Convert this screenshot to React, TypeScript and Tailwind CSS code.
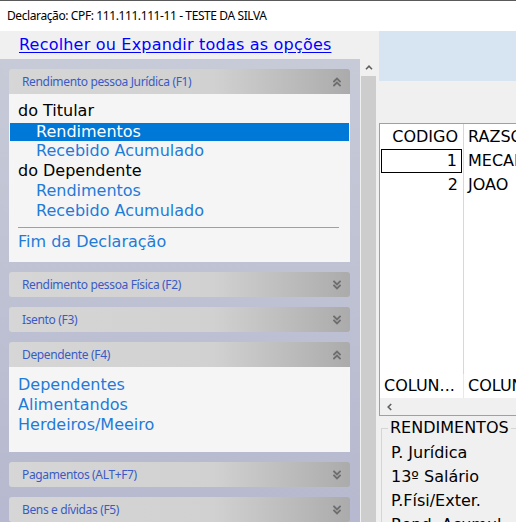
import React from "react";

function Chev({ up }: { up: boolean }) {
  return (
    <svg width="8" height="10" viewBox="0 0 8 10" className="shrink-0">
      {up ? (
        <g fill="none" stroke="#6e6e6e" strokeWidth="1.9" strokeLinecap="square">
          <path d="M1 4.5 L4 1.5 L7 4.5" />
          <path d="M1 8.5 L4 5.5 L7 8.5" />
        </g>
      ) : (
        <g fill="none" stroke="#6e6e6e" strokeWidth="1.9" strokeLinecap="square">
          <path d="M1 1.5 L4 4.5 L7 1.5" />
          <path d="M1 5.5 L4 8.5 L7 5.5" />
        </g>
      )}
    </svg>
  );
}

function Header({ title, open }: { title: string; open: boolean }) {
  return (
    <div
      className={
        "h-[25px] shrink-0 flex items-center justify-between pl-[13px] pr-[9px] bg-[linear-gradient(to_right,#d6d6d6_0%,#d1d1d1_60%,#ababab_100%)] font-['Noto_Sans',sans-serif] text-[12px] tracking-[-0.35px] text-[#3a5bc6] " +
        (open ? "rounded-t-[3px]" : "rounded-[3px]")
      }
    >
      <span>{title}</span>
      <Chev up={open} />
    </div>
  );
}

export default function App() {
  return (
    <div className="w-[516px] h-[522px] overflow-hidden flex flex-col bg-[#f0f0f0] font-['DejaVu_Sans',sans-serif] text-[16px]">
      {/* title bar */}
      <div className="h-[31px] shrink-0 bg-white border-t border-[#5a5a5a] flex items-center pl-[7px] font-['Noto_Sans',sans-serif] text-[12px] tracking-[-0.4px] text-black">
        Declaração: CPF: 111.111.111-11 - TESTE DA SILVA
      </div>
      <div className="flex flex-1 min-h-0">
        {/* left */}
        <div className="w-[379px] shrink-0 flex flex-col min-h-0">
          <div className="h-[28px] shrink-0 flex items-center pl-[19px] leading-none">
            <span className="text-[#0000ff] underline underline-offset-[2px] tracking-[0.2px]">Recolher ou Expandir todas as opções</span>
          </div>
          <div className="flex flex-1 min-h-0">
            <div className="w-[360px] shrink-0 overflow-hidden bg-[linear-gradient(to_bottom,#c7cad7,#b6b9cf)] pt-[10px] pl-[9px] pr-[10px] flex flex-col gap-[10px]">
              {/* Section 1 */}
              <div className="flex flex-col shrink-0">
                <Header title="Rendimento pessoa Jurídica (F1)" open />
                <div className="bg-[#f5f5f5] pt-[7px] pb-[10px] leading-[20px]">
                  <div className="h-5 pl-[9px] text-black">do Titular</div>
                  <div className="h-5 pt-[2px] px-[1px]">
                    <div className="h-[18px] bg-[#0078d7] text-white pl-[26px] leading-[18px]">Rendimentos</div>
                  </div>
                  <div className="h-5 pl-[27px] text-[#1f7bd8]">Recebido Acumulado</div>
                  <div className="h-5 pl-[9px] text-black">do Dependente</div>
                  <div className="h-5 pl-[27px] text-[#1f7bd8]">Rendimentos</div>
                  <div className="h-5 pl-[27px] text-[#1f7bd8]">Recebido Acumulado</div>
                  <div className="mt-[6px] ml-[9px] mr-[11px] h-px bg-[#a0a0a0]" />
                  <div className="mt-[4px] h-5 pl-[9px] text-[#1f7bd8]">Fim da Declaração</div>
                </div>
              </div>
              <div className="shrink-0">
                <Header title="Rendimento pessoa Física (F2)" open={false} />
              </div>
              <div className="shrink-0">
                <Header title="Isento (F3)" open={false} />
              </div>
              <div className="flex flex-col shrink-0">
                <Header title="Dependente (F4)" open />
                <div className="bg-[#f5f5f5] pt-[8px] pb-[17px] leading-[20px] text-[#1f7bd8]">
                  <div className="h-5 pl-[9px]">Dependentes</div>
                  <div className="h-5 pl-[9px]">Alimentandos</div>
                  <div className="h-5 pl-[9px]">Herdeiros/Meeiro</div>
                </div>
              </div>
              <div className="shrink-0">
                <Header title="Pagamentos (ALT+F7)" open={false} />
              </div>
              <div className="shrink-0">
                <Header title="Bens e dívidas (F5)" open={false} />
              </div>
            </div>
            {/* scrollbar */}
            <div className="w-[15px] ml-px shrink-0 flex flex-col">
              <div className="h-[17px] shrink-0 flex items-center justify-center bg-[#f0f0f0]">
                <svg width="8" height="5" viewBox="0 0 8 5">
                  <path d="M1 4.2 L4 1.2 L7 4.2" fill="none" stroke="#606060" strokeWidth="1.6" />
                </svg>
              </div>
              <div className="flex-1 bg-[#cdcdcd]" />
            </div>
          </div>
        </div>
        {/* right */}
        <div className="flex-1 min-w-0 overflow-hidden flex flex-col">
          <div className="h-[50px] shrink-0 bg-[#d7e4f2]" />
          <div className="h-[42px] shrink-0" />
          {/* grid */}
          <div className="h-[293px] shrink-0 w-[320px] border-t border-l border-b border-[#a0a0a0] bg-white flex flex-col leading-[20px] text-black">
            <div className="flex flex-1 min-h-0">
              <div className="w-[84px] shrink-0 border-r border-[#d8d8d8] flex flex-col">
                <div className="h-[25px] flex items-center justify-end pr-[5px]">CODIGO</div>
                <div className="h-[24px] ml-px mr-[1px] border border-black flex items-center justify-end pr-[4px]">1</div>
                <div className="h-[24px] flex items-center justify-end pr-[5px]">2</div>
              </div>
              <div className="flex-1 flex flex-col pl-[4px]">
                <div className="h-[25px] flex items-center">RAZSOCIAL</div>
                <div className="h-[24px] flex items-center">MECANICA</div>
                <div className="h-[24px] flex items-center">JOAO</div>
              </div>
            </div>
            <div className="h-[24px] shrink-0 flex">
              <div className="w-[84px] shrink-0 border-r border-[#e8e8e8] pl-[4px] flex items-center">COLUN...</div>
              <div className="flex-1 pl-[4px] flex items-center">COLUNA</div>
            </div>
            <div className="h-[17px] shrink-0 bg-[#f0f0f0] flex items-center pl-[7px]">
              <svg width="5" height="8" viewBox="0 0 5 8">
                <path d="M4.2 1 L1.2 4 L4.2 7" fill="none" stroke="#606060" strokeWidth="1.6" />
              </svg>
            </div>
          </div>
          {/* group box */}
          <fieldset className="mt-[2px] ml-[2px] w-[300px] border border-[#d5d5d5] text-black leading-[24px]">
            <legend className="ml-[6px] px-[2px] leading-[20px]">RENDIMENTOS</legend>
            <div className="pt-[3px] pl-[9px]">
              <div className="h-6">P. Jurídica</div>
              <div className="h-6">13º Salário</div>
              <div className="h-6">P.Físi/Exter.</div>
              <div className="h-6">Rend. Acumul.</div>
            </div>
          </fieldset>
        </div>
      </div>
    </div>
  );
}
